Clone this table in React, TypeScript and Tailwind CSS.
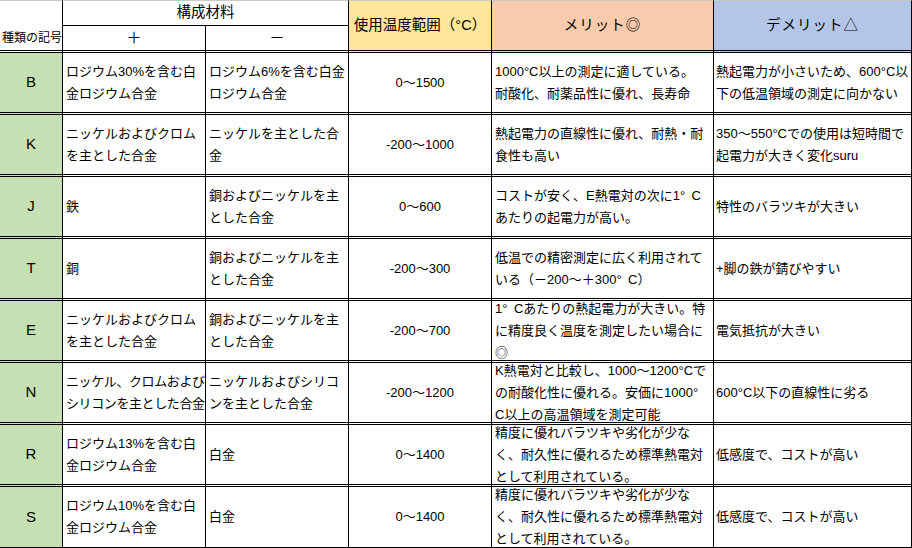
import React from "react";

type Row = {
  sym: string;
  plus: string[];
  minus: string[];
  temp: string;
  merit: string[];
  demerit: string[];
  tightPlus?: boolean;
};

const rows: Row[] = [
  {
    sym: "B",
    plus: ["ロジウム30%を含む白", "金ロジウム合金"],
    minus: ["ロジウム6%を含む白金", "ロジウム合金"],
    temp: "0～1500",
    merit: ["1000°C以上の測定に適している。", "耐酸化、耐薬品性に優れ、長寿命"],
    demerit: ["熱起電力が小さいため、600°C以", "下の低温領域の測定に向かない"],
  },
  {
    sym: "K",
    plus: ["ニッケルおよびクロム", "を主とした合金"],
    minus: ["ニッケルを主とした合", "金"],
    temp: "-200～1000",
    merit: ["熱起電力の直線性に優れ、耐熱・耐", "食性も高い"],
    demerit: ["350～550°Cでの使用は短時間で", "起電力が大きく変化suru"],
  },
  {
    sym: "J",
    plus: ["鉄"],
    minus: ["銅およびニッケルを主", "とした合金"],
    temp: "0～600",
    merit: ["コストが安く、E熱電対の次に1°\u2002C", "あたりの起電力が高い。"],
    demerit: ["特性のバラツキが大きい"],
  },
  {
    sym: "T",
    plus: ["銅"],
    minus: ["銅およびニッケルを主", "とした合金"],
    temp: "-200～300",
    merit: ["低温での精密測定に広く利用されて", "いる（－200～＋300°\u2002C）"],
    demerit: ["+脚の鉄が錆びやすい"],
  },
  {
    sym: "E",
    plus: ["ニッケルおよびクロム", "を主とした合金"],
    minus: ["銅およびニッケルを主", "とした合金"],
    temp: "-200～700",
    merit: ["1°\u2002Cあたりの熱起電力が大きい。特", "に精度良く温度を測定したい場合に", "◎"],
    demerit: ["電気抵抗が大きい"],
  },
  {
    sym: "N",
    plus: ["ニッケル、クロムおよび", "シリコンを主とした合金"],
    minus: ["ニッケルおよびシリコ", "ンを主とした合金"],
    temp: "-200～1200",
    merit: ["K熱電対と比較し、1000～1200°Cで", "の耐酸化性に優れる。安価に1000°", "C以上の高温領域を測定可能"],
    demerit: ["600°C以下の直線性に劣る"],
    tightPlus: true,
  },
  {
    sym: "R",
    plus: ["ロジウム13%を含む白", "金ロジウム合金"],
    minus: ["白金"],
    temp: "0～1400",
    merit: ["精度に優れバラツキや劣化が少な", "く、耐久性に優れるため標準熱電対", "として利用されている。"],
    demerit: ["低感度で、コストが高い"],
  },
  {
    sym: "S",
    plus: ["ロジウム10%を含む白", "金ロジウム合金"],
    minus: ["白金"],
    temp: "0～1400",
    merit: ["精度に優れバラツキや劣化が少な", "く、耐久性に優れるため標準熱電対", "として利用されている。"],
    demerit: ["低感度で、コストが高い"],
  },
];

function Lines({ lines }: { lines: string[] }) {
  return (
    <>
      {lines.map((l, i) => (
        <div key={i} className="whitespace-nowrap">
          {l}
        </div>
      ))}
    </>
  );
}

export default function App() {
  return (
    <div className="w-[912px] h-[548px] bg-white overflow-hidden text-black font-['Liberation_Sans','Noto_Sans_CJK_JP',sans-serif]">
      <div className="grid grid-cols-[63px_143px_143px_143px_222px_198px] grid-rows-[26px_27px_repeat(7,62px)_61px]">
        {/* header row 1 */}
        <div className="border-t border-t-[#c8c8c8] border-r border-r-black" />
        <div className="col-span-2 border-t border-t-[#c8c8c8] border-r border-r-black border-b border-b-black flex items-center justify-center text-[14.5px]">
          構成材料
        </div>
        <div className="row-span-2 bg-[#FFE699] border-t border-t-[#c8c8c8] border-r border-r-black border-b-[3px] border-b-black border-double flex items-center justify-center text-[14.5px] whitespace-nowrap">
          使用温度範囲（°C）
        </div>
        <div className="row-span-2 bg-[#F8CBAD] border-t border-t-[#c8c8c8] border-r border-r-black border-b-[3px] border-b-black border-double flex items-center justify-center text-[14.5px] tracking-[1px]">
          メリット◎
        </div>
        <div className="row-span-2 bg-[#B4C6E7] border-t border-t-[#c8c8c8] border-r border-r-black border-b-[3px] border-b-black border-double flex items-center justify-center text-[14.5px] tracking-[1px]">
          デメリット△
        </div>
        {/* header row 2 */}
        <div className="border-r border-r-black border-b-[3px] border-b-black border-double flex items-center pl-[2px] text-[12px] whitespace-nowrap">
          種類の記号
        </div>
        <div className="border-r border-r-black border-b-[3px] border-b-black border-double flex items-center justify-center text-[15px]">
          ＋
        </div>
        <div className="border-r border-r-black border-b-[3px] border-b-black border-double flex items-center justify-center text-[15px]">
          －
        </div>

        {rows.map((r, i) => {
          const last = i === rows.length - 1;
          const b = last
            ? "border-r border-r-black border-b border-b-black"
            : "border-r border-r-black border-b-[3px] border-b-black border-double";
          return (
            <React.Fragment key={r.sym}>
              <div className={`${b} bg-[#C6E0B4] flex items-center justify-center text-[15px]`}>
                {r.sym}
              </div>
              <div
                className={`${b} flex flex-col justify-center overflow-hidden pl-[3px] text-[13px] leading-[22px] ${
                  r.tightPlus ? "tracking-[-0.4px]" : ""
                }`}
              >
                <Lines lines={r.plus} />
              </div>
              <div className={`${b} flex flex-col justify-center overflow-hidden pl-[3px] text-[13px] leading-[22px]`}>
                <Lines lines={r.minus} />
              </div>
              <div className={`${b} flex items-center justify-center text-[13px]`}>
                {r.temp}
              </div>
              <div className={`${b} flex flex-col justify-center overflow-hidden pl-[3px] text-[13px] leading-[22px]`}>
                <Lines lines={r.merit} />
              </div>
              <div className={`${b} flex flex-col justify-center overflow-hidden pl-[2px] text-[13px] leading-[22px]`}>
                <Lines lines={r.demerit} />
              </div>
            </React.Fragment>
          );
        })}
      </div>
    </div>
  );
}
